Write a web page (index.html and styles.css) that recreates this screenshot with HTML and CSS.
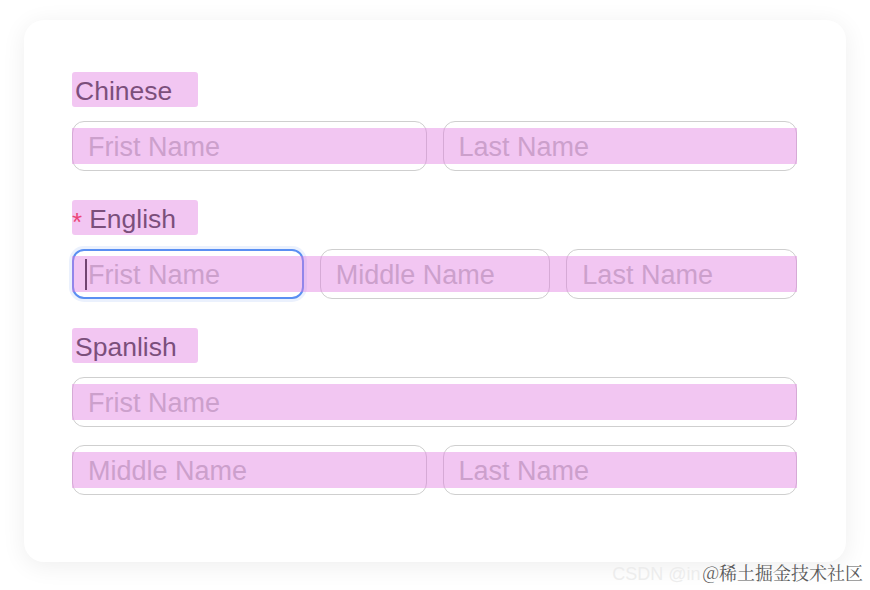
FILE: index.html
```html
<!DOCTYPE html>
<html>
<head>
<meta charset="utf-8">
<link rel="stylesheet" href="styles.css">
</head>
<body>
<div class="card">
  <div class="section">
    <div class="label">Chinese</div>
    <div class="row">
      <div class="field"><span class="ph">Frist Name</span></div>
      <div class="field"><span class="ph">Last Name</span></div>
    </div>
  </div>
  <div class="section">
    <div class="label"><span class="req">*</span>English</div>
    <div class="row">
      <div class="field focus"><span class="caret"></span><span class="ph">Frist Name</span></div>
      <div class="field"><span class="ph">Middle Name</span></div>
      <div class="field"><span class="ph">Last Name</span></div>
    </div>
  </div>
  <div class="section">
    <div class="label">Spanlish</div>
    <div class="row">
      <div class="field"><span class="ph">Frist Name</span></div>
    </div>
    <div class="row second">
      <div class="field"><span class="ph">Middle Name</span></div>
      <div class="field"><span class="ph">Last Name</span></div>
    </div>
  </div>
</div>
<div class="watermark"><span class="wm-faint">CSDN @in</span><span class="wm-main">@稀土掘金技术社区</span></div>
</body>
</html>
```
FILE: styles.css
```css
html, body {
  margin: 0;
  padding: 0;
  background: #ffffff;
}
body {
  width: 870px;
  height: 590px;
  position: relative;
  overflow: hidden;
  font-family: "Liberation Sans", Arial, sans-serif;
}
.card {
  box-sizing: border-box;
  margin: 20px 0 0 24px;
  width: 822px;
  height: 542px;
  background: #fff;
  border-radius: 20px;
  box-shadow: 0 4px 24px rgba(0, 0, 0, 0.07);
  padding: 52px 49px 0 48px;
}
.section + .section {
  margin-top: 29px;
}
.label {
  position: relative;
  box-sizing: border-box;
  width: 126px;
  height: 35px;
  padding-left: 3px;
  padding-top: 4px;
  font-size: 26.5px;
  color: #333;
  margin-bottom: 14px;
  display: flex;
  align-items: center;
}
.label::after {
  content: "";
  position: absolute;
  inset: 0;
  border-radius: 3px;
  background: rgba(225, 120, 225, 0.42);
  pointer-events: none;
}
.req {
  color: #f5222d;
  font-size: 26px;
  margin-right: 7px;
  margin-left: -3px;
  position: relative;
  top: 3px;
}
.row {
  position: relative;
  display: flex;
  gap: 16px;
  height: 50px;
}
.row::after {
  content: "";
  position: absolute;
  left: 0;
  right: 0;
  top: 7px;
  bottom: 7px;
  background: rgba(225, 120, 225, 0.42);
  pointer-events: none;
}
.row.second {
  margin-top: 18px;
}
.field {
  position: relative;
  flex: 1;
  box-sizing: border-box;
  height: 50px;
  border: 1.5px solid #cfcfcf;
  border-radius: 12px;
  background: #fff;
  display: flex;
  align-items: center;
  padding-left: 15px;
  padding-top: 3px;
}
.field.focus {
  border: 2px solid #5a8ff2;
  padding-left: 14px;
  box-shadow: 0 0 0 3px rgba(90, 143, 242, 0.12);
}
.ph {
  font-size: 27px;
  color: #bdbdbd;
  white-space: nowrap;
}
.caret {
  position: absolute;
  left: 11px;
  top: 8px;
  width: 2px;
  height: 31px;
  background: #222;
}
.watermark {
  position: absolute;
  right: 7px;
  top: 559px;
  display: flex;
  align-items: baseline;
  font-size: 18px;
}
.wm-faint {
  color: rgba(235, 235, 235, 0.9);
  font-family: "Liberation Sans", sans-serif;
  margin-right: 2px;
}
.wm-main {
  color: #5a5a5a;
  font-family: "Noto Serif CJK SC", "Noto Sans CJK SC", serif;
  text-shadow: 0 0 1px #fff;
}
```
